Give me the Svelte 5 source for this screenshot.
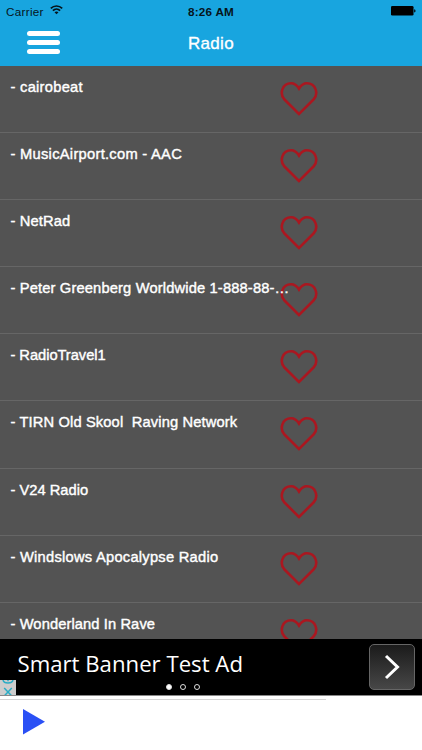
<script lang="ts">
	type Station = { name: string; tracking: number };

	const stations: Station[] = [
		{ name: 'cairobeat', tracking: 0.27 },
		{ name: 'MusicAirport.com - AAC', tracking: 0.28 },
		{ name: 'NetRad', tracking: 0.13 },
		{ name: 'Peter Greenberg Worldwide 1-888-88-…', tracking: 0.15 },
		{ name: 'RadioTravel1', tracking: -0.05 },
		{ name: 'TIRN Old Skool  Raving Network', tracking: 0.13 },
		{ name: 'V24 Radio', tracking: 0 },
		{ name: 'Windslows Apocalypse Radio', tracking: 0.25 },
		{ name: 'Wonderland In Rave', tracking: 0.1 }
	];
</script>

<div class="screen">
	<header>
		<div class="status">
			<div class="carrier">
				<span>Carrier</span>
				<svg width="13" height="10" viewBox="0 0 13 10" fill="none" stroke="#06141b" stroke-width="1.7">
					<path d="M.8 3.4C4 .2 9 .2 12.2 3.4M2.9 5.6c2-2 5.2-2 7.2 0" />
					<path d="M4.5 7.2c1.2-1 2.8-1 4 0l-2 2z" fill="#06141b" stroke="none" />
				</svg>
			</div>
			<time>8:26 AM</time>
			<div class="power">
				<svg width="25" height="10" viewBox="0 0 25 10">
					<rect width="22.5" height="9.6" rx="1.3" />
					<path d="M23.2 3.2c1.8.3 1.8 3 0 3.3z" />
				</svg>
			</div>
		</div>
		<nav>
			<button class="menu" aria-label="Menu">
				<i></i><i></i><i></i>
			</button>
			<h1>Radio</h1>
		</nav>
	</header>

	<ul class="stations">
		{#each stations as station}
			<li>
				<span class="name" style="letter-spacing: {station.tracking}px">- {station.name}</span>
				<svg class="heart" width="38" height="36" viewBox="0 0 38 36">
					<path d="M19 33 4.500 18.500C-1 12.500 2.500 2.300 11 2.300c3.500 0 6 2 8 5.200 2-3.200 4.500-5.200 8-5.200 8.500 0 12 10.200 6.500 16.200z" />
				</svg>
			</li>
		{/each}
	</ul>

	<section class="ad">
		<span class="ad-title">Smart Banner Test Ad</span>
		<button class="next" aria-label="Open">
			<svg width="16" height="26" viewBox="0 0 16 26">
				<path d="m2 2 11.500 11L2 24" />
			</svg>
		</button>
		<div class="dots"><i class="on"></i><i></i><i></i></div>
		<svg class="choices" width="16" height="15" viewBox="0 0 16 15">
			<rect width="16" height="15" fill="#cdcdcd" />
			<path d="M3 0c1 4 9 4 10 0M8 0v1.300M4.200 8l7.600 8M11.800 8l-7.600 8" />
		</svg>
	</section>

	<footer>
		<div class="progress"></div>
		<svg class="play" width="22" height="26" viewBox="0 0 22 26">
			<path d="M0 0v25.500L22 12.800z" />
		</svg>
	</footer>
</div>

<style>
	:global(body) {
		margin: 0;
	}

	.screen {
		width: 422px;
		height: 750px;
		display: flex;
		flex-direction: column;
		overflow: hidden;
		background: #fff;
		font-family: 'Liberation Sans', Arial, sans-serif;
	}

	button {
		padding: 0;
		border: 0;
		background: none;
	}

	header {
		flex: none;
		height: 65.5px;
		background: #18a5df;
	}

	.status {
		display: grid;
		grid-template-columns: 1fr auto 1fr;
		align-items: center;
		height: 22px;
		padding: 0 6px;
		font-size: 11.7px;
		color: #06141b;
	}

	.carrier {
		display: flex;
		align-items: center;
		gap: 6px;
		letter-spacing: 0.3px;
	}

	.carrier svg {
		margin-top: -2px;
	}

	time {
		font-weight: 700;
		letter-spacing: 0.25px;
	}

	.power {
		display: flex;
		justify-content: flex-end;
	}

	nav {
		display: grid;
		grid-template-columns: 1fr auto 1fr;
		align-items: center;
		height: 43px;
	}

	.menu {
		display: flex;
		flex-direction: column;
		gap: 4px;
		width: 33px;
		margin: 0 0 2px 26.5px;
	}

	.menu i {
		height: 5.2px;
		border-radius: 3px;
		background: #fff;
	}

	h1 {
		margin: 0;
		font-size: 17px;
		font-weight: 400;
		letter-spacing: 0.3px;
		color: #fff;
		-webkit-text-stroke: 0.35px #fff;
	}

	.stations {
		flex: none;
		box-sizing: border-box;
		height: 573px;
		margin: 0;
		padding: 0;
		overflow: hidden;
		list-style: none;
		background: #535353;
	}

	li {
		box-sizing: border-box;
		display: flex;
		height: 67.2px;
		padding: 12px 0 0 10.5px;
		border-bottom: 1px solid #666;
	}

	.name {
		z-index: 1;
		width: 280px;
		margin-right: -10.5px;
		font-size: 14.7px;
		line-height: 18px;
		white-space: pre;
		color: #fff;
		-webkit-text-stroke: 0.4px #fff;
	}

	.heart {
		flex: none;
		margin-top: 3px;
	}

	.heart path {
		fill: none;
		stroke: #aa1720;
		stroke-width: 2.6;
	}

	.ad {
		position: relative;
		flex: none;
		box-sizing: border-box;
		display: flex;
		justify-content: space-between;
		height: 57px;
		padding: 5px 7.5px 0 17.5px;
		border-bottom: 1px solid #888;
		background: #000;
	}

	.ad-title {
		font-family: 'Open Sans', 'Noto Sans', sans-serif;
		font-size: 22.2px;
		line-height: 40px;
		color: #fff;
	}

	.next {
		box-sizing: border-box;
		display: flex;
		align-items: center;
		justify-content: center;
		width: 46px;
		height: 46px;
		border: 1px solid #666;
		border-radius: 5px;
		background: linear-gradient(#1b1b1b, #474747);
	}

	.next path {
		fill: none;
		stroke: #fff;
		stroke-width: 3;
	}

	.dots {
		position: absolute;
		left: 166px;
		bottom: 4.8px;
		display: flex;
		gap: 8.2px;
	}

	.dots i {
		box-sizing: border-box;
		width: 6px;
		height: 6px;
		border: 1px solid #ddd;
		border-radius: 50%;
	}

	.dots .on {
		background: #fff;
	}

	.choices {
		position: absolute;
		left: 0;
		bottom: 0;
	}

	.choices path {
		fill: none;
		stroke: #2bacc5;
		stroke-width: 1.5;
	}

	footer {
		flex: 1;
		padding-top: 3px;
	}

	.progress {
		width: 326px;
		height: 1px;
		background: #d4d4d4;
	}

	.play {
		display: block;
		margin: 9px 0 0 23px;
		fill: #2a50f5;
	}
</style>
